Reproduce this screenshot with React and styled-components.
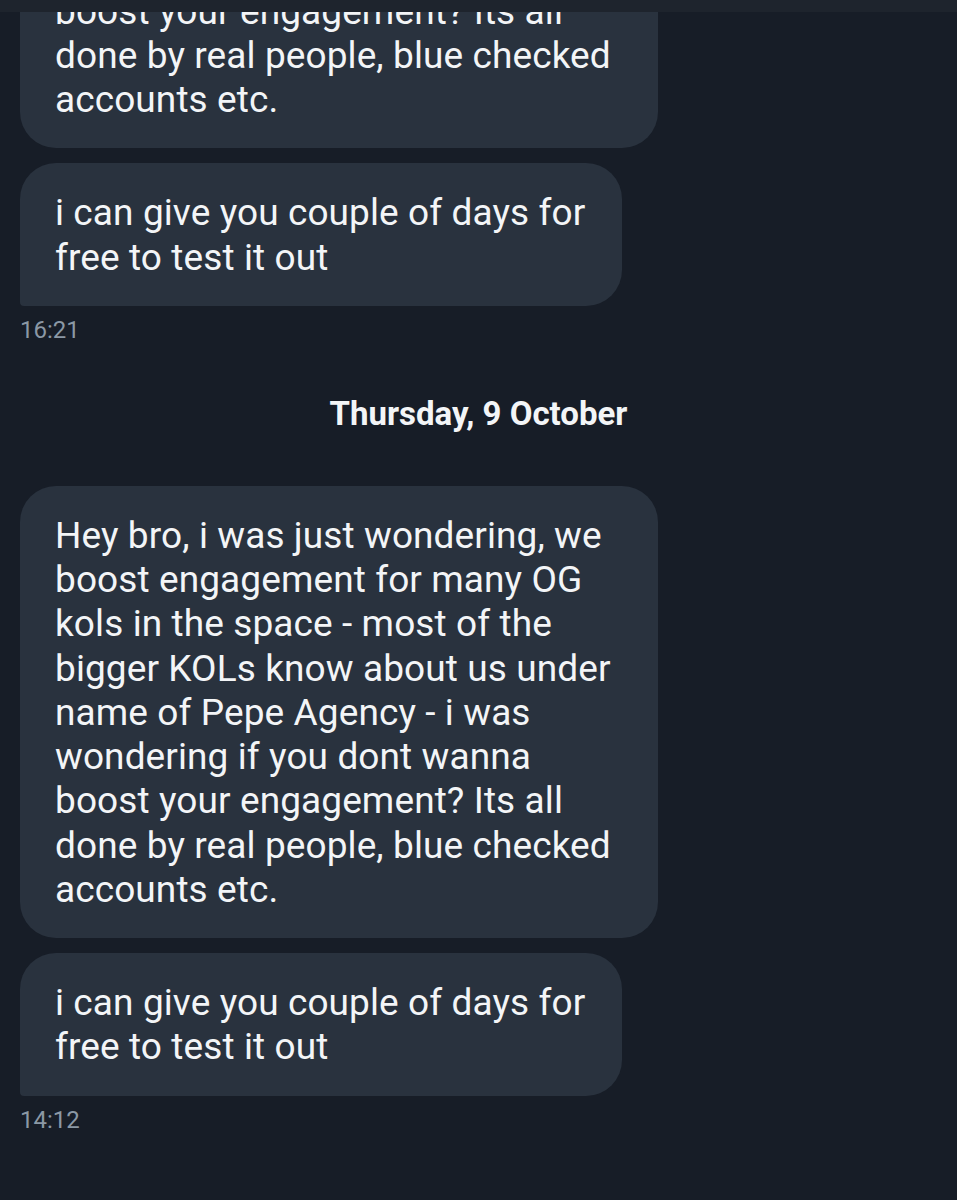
import React from 'react'
import styled, { createGlobalStyle } from 'styled-components'

const GlobalStyle = createGlobalStyle`
    html, body {
        margin: 0;
        padding: 0;
        background: #171d27;
    }
    * {
        box-sizing: border-box;
    }
`

const Screen = styled.div`
    position: relative;
    width: 957px;
    height: 1200px;
    overflow: hidden;
    background: #171d27;
    font-family: Roboto, 'Noto Sans', sans-serif;
`

// strip of the header that sits over the scrolled thread
const TopBar = styled.div`
    position: absolute;
    top: 0;
    left: 0;
    right: 0;
    height: 12px;
    background: #1e242d;
    z-index: 2;
`

const Thread = styled.div`
    display: flex;
    flex-direction: column;
    align-items: flex-start;
    padding: 0 20px;
    margin-top: -304px;
`

const Bubble = styled.div`
    width: ${(p) => p.$width}px;
    padding: 28px 20px 26px 35px;
    background: #29323e;
    color: #f3f5f7;
    font-size: 37px;
    line-height: 44.25px;
    letter-spacing: 0.1px;
    white-space: nowrap;
    border-radius: ${(p) => (p.$tail ? '36px 36px 36px 4px' : '36px')};
    & + & {
        margin-top: 15px;
    }
`

const Time = styled.div`
    margin-top: 12px;
    color: #8b98a5;
    font-size: 24px;
    line-height: 24px;
`

const DateLabel = styled.div`
    align-self: center;
    margin: 52px 0 52px;
    color: #f3f5f7;
    font-size: 33px;
    font-weight: 700;
    line-height: 40px;
`

const pitch = [
    'Hey bro, i was just wondering, we',
    'boost engagement for many OG',
    'kols in the space - most of the',
    'bigger KOLs know about us under',
    'name of Pepe Agency - i was',
    'wondering if you dont wanna',
    'boost your engagement? Its all',
    'done by real people, blue checked',
    'accounts etc.',
]

const offer = ['i can give you couple of days for', 'free to test it out']

const Lines = ({ lines }) =>
    lines.map((line, i) => (
        <React.Fragment key={i}>
            {i > 0 && <br />}
            {line}
        </React.Fragment>
    ))

const Group = ({ time }) => (
    <>
        <Bubble $width={638}>
            <Lines lines={pitch} />
        </Bubble>
        <Bubble $width={602} $tail>
            <Lines lines={offer} />
        </Bubble>
        <Time>{time}</Time>
    </>
)

const App = () => {
    return (
        <Screen>
            <GlobalStyle />
            <TopBar />
            <Thread>
                <Group time='16:21' />
                <DateLabel>Thursday, 9 October</DateLabel>
                <Group time='14:12' />
            </Thread>
        </Screen>
    )
}

export default App
